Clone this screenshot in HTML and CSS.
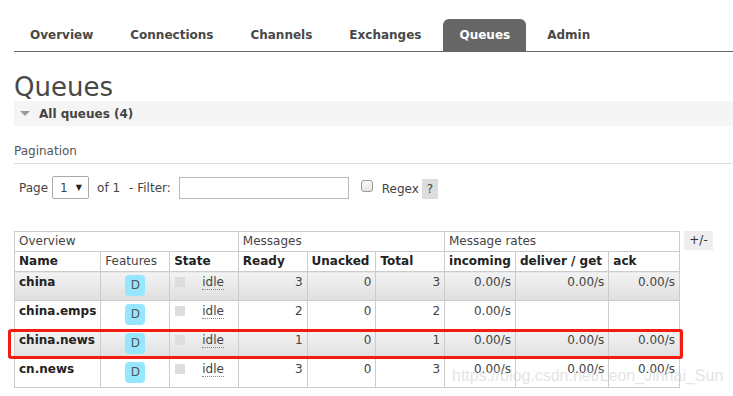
FILE: index.html
```html
<!DOCTYPE html>
<html>
<head>
<meta charset="utf-8">
<link rel="stylesheet" href="styles.css">
</head>
<body>
<div class="nav">
  <ul class="tabs">
    <li><a>Overview</a></li>
    <li><a>Connections</a></li>
    <li><a>Channels</a></li>
    <li><a>Exchanges</a></li>
    <li class="active"><a>Queues</a></li>
    <li><a>Admin</a></li>
  </ul>
</div>
<div class="main">
  <h1>Queues</h1>
  <div class="section-head"><span class="tri"></span>All queues (4)</div>
  <div class="pagination-title">Pagination</div>
  <div class="controls">
    <span>Page</span>
    <span class="select">1 <span class="arrow">&#9660;</span></span>
    <span>of 1</span>
    <span class="dash">- Filter:</span>
    <span class="input"></span>
    <span class="checkbox"></span>
    <span class="regex">Regex</span>
    <span class="help">?</span>
  </div>
  <div class="table-wrap">
    <table class="list">
      <thead>
        <tr class="group">
          <th colspan="3">Overview</th>
          <th colspan="3">Messages</th>
          <th colspan="3">Message rates</th>
        </tr>
        <tr class="cols">
          <th class="c-name">Name</th>
          <th class="c-feat plain">Features</th>
          <th class="c-state">State</th>
          <th class="c-num">Ready</th>
          <th class="c-num">Unacked</th>
          <th class="c-num">Total</th>
          <th class="c-rate">incoming</th>
          <th class="c-rate2">deliver / get</th>
          <th class="c-rate">ack</th>
        </tr>
      </thead>
      <tbody>
        <tr class="alt">
          <td class="name">china</td>
          <td class="feat"><span class="badge">D</span></td>
          <td class="state"><span class="sq"></span><span class="idle">idle</span></td>
          <td class="r">3</td><td class="r">0</td><td class="r">3</td>
          <td class="r">0.00/s</td><td class="r">0.00/s</td><td class="r">0.00/s</td>
        </tr>
        <tr>
          <td class="name">china.emps</td>
          <td class="feat"><span class="badge">D</span></td>
          <td class="state"><span class="sq"></span><span class="idle">idle</span></td>
          <td class="r">2</td><td class="r">0</td><td class="r">2</td>
          <td class="r">0.00/s</td><td class="r"></td><td class="r"></td>
        </tr>
        <tr class="alt">
          <td class="name">china.news</td>
          <td class="feat"><span class="badge">D</span></td>
          <td class="state"><span class="sq"></span><span class="idle">idle</span></td>
          <td class="r">1</td><td class="r">0</td><td class="r">1</td>
          <td class="r">0.00/s</td><td class="r">0.00/s</td><td class="r">0.00/s</td>
        </tr>
        <tr>
          <td class="name">cn.news</td>
          <td class="feat"><span class="badge">D</span></td>
          <td class="state"><span class="sq"></span><span class="idle">idle</span></td>
          <td class="r">3</td><td class="r">0</td><td class="r">3</td>
          <td class="r">0.00/s</td><td class="r">0.00/s</td><td class="r">0.00/s</td>
        </tr>
      </tbody>
    </table>
    <span class="toggle">+/-</span>
    <div class="highlight"></div>
    <div class="watermark">https://blog.csdn.net/Leon_Jinhai_Sun</div>
  </div>
</div>
</body>
</html>
```
FILE: styles.css
```css
* { box-sizing: border-box; }
body {
  margin: 0;
  font-family: "DejaVu Sans", Verdana, sans-serif;
  font-size: 12px;
  color: #444;
  background: #fff;
  overflow: hidden;
}
.nav {
  margin-left: 14px;
  padding-top: 20px;
  border-bottom: 1px solid #666;
}
.tabs {
  list-style: none;
  margin: 0;
  padding: 0;
  display: flex;
}
.tabs li {
  margin-right: 5px;
}
.tabs a {
  display: block;
  height: 31px;
  line-height: 31px;
  padding: 0 16px;
  font-weight: bold;
  font-size: 12px;
  color: #484848;
  border-radius: 6px 6px 0 0;
}
.tabs li.active {
  margin-left: 1px;
}
.tabs li.active a {
  background: #666;
  color: #fff;
  margin-top: -1px;
  height: 32px;
  line-height: 33px;
}
.main {
  padding-left: 14px;
}
h1 {
  margin: 0;
  padding-top: 21px;
  font-size: 26px;
  font-weight: normal;
  line-height: 28px;
  color: #484848;
}
.section-head {
  height: 25px;
  background: #f5f5f5;
  display: flex;
  align-items: center;
  font-weight: bold;
  font-size: 12px;
  color: #444;
  padding-left: 6px;
}
.tri {
  width: 0;
  height: 0;
  border-left: 5px solid transparent;
  border-right: 5px solid transparent;
  border-top: 5px solid #999;
  margin-right: 9px;
}
.pagination-title {
  margin-top: 17px;
  padding-bottom: 4px;
  border-bottom: 1px solid #ddd;
  font-size: 12px;
  color: #555;
  line-height: 16px;
}
.controls {
  margin-top: 12px;
  display: flex;
  align-items: center;
  padding-left: 5px;
  height: 23px;
  font-size: 12px;
  color: #444;
}
.select {
  margin-left: 4px;
  width: 37px;
  height: 23px;
  border: 1px solid #aaa;
  border-radius: 2px;
  display: flex;
  align-items: center;
  padding-left: 7px;
  margin-right: 8px;
}
.select .arrow {
  font-size: 8px;
  margin-left: 8px;
  color: #222;
}
.dash { margin-left: 9px; margin-right: 8px; }
.input {
  width: 170px;
  height: 22px;
  border: 1px solid #bbb;
}
.checkbox {
  margin-left: 12px;
  width: 12px;
  height: 12px;
  border: 1px solid #999;
  border-radius: 3px;
  background: linear-gradient(#fafafa, #e4e4e4);
  margin-bottom: 3px;
}
.regex { margin-left: 9px; margin-right: 3px; margin-top: 2px; }
.help {
  width: 16px;
  height: 20px;
  background: #ddd;
  display: flex;
  align-items: center;
  justify-content: center;
  margin-top: 2px;
}
.table-wrap {
  position: relative;
  margin-top: 32px;
}
table.list {
  border-collapse: collapse;
  width: 666px;
  font-size: 12px;
  color: #444;
}
table.list th, table.list td {
  border: 1px solid #ccc;
  padding: 0 4px;
  text-align: left;
  vertical-align: top;
}
tr.group th {
  font-weight: normal;
  height: 20px;
  line-height: 19px;
}
tr.cols th {
  height: 20px;
  line-height: 19px;
  font-weight: bold;
  color: #222;
}
tr.cols th.plain { font-weight: normal; color: #444; }
.c-name { width: 86px; }
.c-feat { width: 69px; }
.c-state { width: 69px; }
.c-num { width: 69px; }
.c-rate { width: 71px; }
.c-rate2 { width: 94px; }
table.list tbody td {
  height: 29px;
  padding-top: 3px;
  line-height: 15px;
}
table.list tbody tr.alt td {
  background: linear-gradient(#f3f3f3, #dfdfdf);
}
table.list td.name { font-weight: bold; color: #222; }
table.list td.r { text-align: right; }
table.list td.feat { text-align: center; }
.badge {
  display: inline-block;
  width: 20px;
  height: 21px;
  line-height: 21px;
  border-radius: 4px;
  background: #94e7fd;
  color: #555;
  text-align: center;
}
table.list td.state { padding-left: 5px; }
.sq {
  display: inline-block;
  width: 10px;
  height: 10px;
  background: #ddd;
  vertical-align: top;
  margin-top: 2px;
}
.idle {
  margin-left: 17px;
  border-bottom: 1px dotted #888;
}
.toggle {
  position: absolute;
  left: 670px;
  top: 0;
  width: 29px;
  height: 19px;
  background: #eee;
  text-align: center;
  line-height: 19px;
  color: #333;
}
.highlight {
  position: absolute;
  left: -6px;
  top: 98px;
  width: 675px;
  height: 30px;
  border: 3px solid #f21c10;
  border-radius: 3px;
}
.watermark {
  position: absolute;
  left: 438px;
  top: 136px;
  font-family: "Liberation Sans", Arial, sans-serif;
  font-size: 16px;
  color: rgba(200, 200, 200, 0.5);
  white-space: nowrap;
}
```
